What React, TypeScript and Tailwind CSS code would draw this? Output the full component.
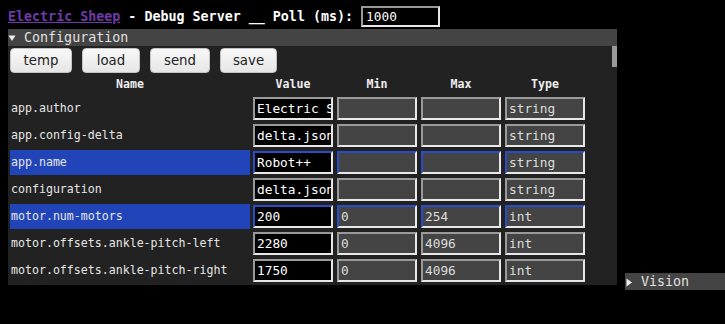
import React from "react";

type Row = { name: string; value: string; min: string; max: string; type: string; hl?: boolean };

const rows: Row[] = [
  { name: "app.author", value: "Electric Sheep", min: "", max: "", type: "string" },
  { name: "app.config-delta", value: "delta.json", min: "", max: "", type: "string" },
  { name: "app.name", value: "Robot++", min: "", max: "", type: "string", hl: true },
  { name: "configuration", value: "delta.json", min: "", max: "", type: "string" },
  { name: "motor.num-motors", value: "200", min: "0", max: "254", type: "int", hl: true },
  { name: "motor.offsets.ankle-pitch-left", value: "2280", min: "0", max: "4096", type: "int" },
  { name: "motor.offsets.ankle-pitch-right", value: "1750", min: "0", max: "4096", type: "int" },
];

function Cell({ v, dark, hl }: { v: string; dark?: boolean; hl?: boolean }) {
  return (
    <div className="p-[1px]">
      <input
        readOnly
        value={v}
        className={
          "block w-[80px] h-[23px] border-2 pl-[2px] outline-none text-[12.8px] font-['DejaVu_Sans_Mono',monospace] " +
          (dark ? "bg-black text-white " : "bg-[#444444] text-[#dddddd] ") +
          (hl
            ? "border-t-[#2a4cc4] border-l-[#2a4cc4] border-b-[#e8e8e8] border-r-[#e8e8e8]"
            : "border-t-[#9a9a9a] border-l-[#9a9a9a] border-b-[#e8e8e8] border-r-[#e8e8e8]")
        }
      />
    </div>
  );
}

function Tri({ down }: { down?: boolean }) {
  return (
    <svg width="8" height="16" viewBox="0 0 8 16" className="mr-[8px] shrink-0">
      {down ? (
        <polygon points="0.5,5.5 7.5,5.5 4,11" fill="#eeeeee" />
      ) : (
        <polygon points="1.5,4.5 7,8.5 1.5,12.5" fill="#eeeeee" />
      )}
    </svg>
  );
}

export default function App() {
  const mono = "font-['DejaVu_Sans_Mono',monospace]";
  return (
    <div className={"min-h-[324px] bg-black pl-[8px] pt-[6px] text-[#e0e0e0] " + mono}>
      <div className="flex items-center h-[21px] mb-[2px]">
        <span className="text-[13.33px] font-bold text-white whitespace-pre">
          <a className="text-[#6f3aa8] underline">Electric Sheep</a>
          {" - Debug Server __ Poll (ms): "}
        </span>
        <input
          readOnly
          value="1000"
          className="w-[79px] h-[21px] bg-black text-white text-[12.8px] pl-[3px] border-2 border-t-[#9a9a9a] border-l-[#9a9a9a] border-b-[#e8e8e8] border-r-[#e8e8e8] outline-none"
        />
      </div>
      <div className="flex items-end">
        <div className="w-[609px] shrink-0">
          <div className="h-[17px] bg-[#444444] flex items-center text-[13.33px] text-[#e0e0e0]">
            <Tri down />
            <span>Configuration</span>
          </div>
          <div className="h-[239px] bg-[#222222] flex">
            <div className="flex-1 overflow-hidden pl-[2px] pt-[2px]">
              <div className="flex gap-[10px] font-['DejaVu_Sans',sans-serif] text-[13.33px] text-[#222222]">
                {[
                  ["temp", 62],
                  ["load", 58],
                  ["send", 60],
                  ["save", 57],
                ].map(([t, w]) => (
                  <div
                    key={t as string}
                    style={{ width: w as number }}
                    className="h-[25px] rounded-[4px] border border-[#c4c4c4] bg-gradient-to-b from-[#f8f8f8] to-[#e6e6e6] flex items-center justify-center"
                  >
                    {t}
                  </div>
                ))}
              </div>
              <div className="flex flex-col gap-[2px] mt-[3px]">
                <div className="flex gap-[2px] h-[18px] items-center text-[11.6px] font-bold text-[#eeeeee]">
                  <div className="w-[240px] text-center">Name</div>
                  <div className="w-[82px] text-center">Value</div>
                  <div className="w-[82px] text-center">Min</div>
                  <div className="w-[82px] text-center">Max</div>
                  <div className="w-[82px] text-center">Type</div>
                </div>
                {rows.map((r) => (
                  <div key={r.name} className="flex gap-[2px] h-[25px]">
                    <div
                      className={
                        "w-[240px] flex items-center pl-[1px] text-[11.6px] text-[#e6e6e6] " +
                        (r.hl ? "bg-[#2145b9]" : "")
                      }
                    >
                      {r.name}
                    </div>
                    <Cell v={r.value} dark hl={r.hl} />
                    <Cell v={r.min} hl={r.hl} />
                    <Cell v={r.max} hl={r.hl} />
                    <Cell v={r.type} hl={r.hl} />
                  </div>
                ))}
              </div>
            </div>
            <div className="w-[5px] shrink-0">
              <div className="h-[21px] bg-[#999999]" />
            </div>
          </div>
        </div>
        <div className="flex-1 ml-[8px] -mb-[5px] h-[17px] bg-[#444444] flex items-center text-[13.33px] text-[#e0e0e0]">
          <Tri />
          <span>Vision</span>
        </div>
      </div>
    </div>
  );
}
